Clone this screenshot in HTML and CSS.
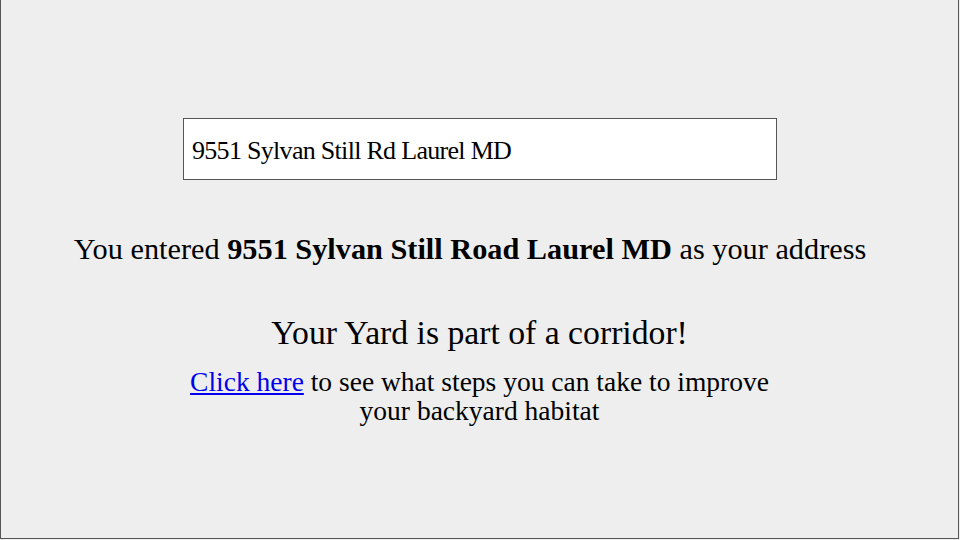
FILE: index.html
```html
<!DOCTYPE html>
<html>
<head>
<meta charset="utf-8">
<link rel="stylesheet" href="styles.css">
</head>
<body>
<div class="slide">
  <div class="address-box">9551 Sylvan Still Rd Laurel MD</div>
  <p class="entered">You entered <b>9551 Sylvan Still Road Laurel MD</b> as your address</p>
  <h1 class="result">Your Yard is part of a corridor!</h1>
  <p class="steps"><a href="#">Click here</a> to see what steps you can take to improve<br>your backyard habitat</p>
</div>
</body>
</html>
```
FILE: styles.css
```css
html, body {
  margin: 0;
  padding: 0;
  background: #eeeeee;
}
.slide {
  box-sizing: border-box;
  width: 959px;
  height: 539px;
  background: #eeeeee;
  border-left: 1px solid #555;
  border-right: 1px solid #555;
  border-bottom: 1px solid #555;
  font-family: "Liberation Serif", serif;
  color: #000;
  display: flex;
  flex-direction: column;
  align-items: center;
  padding-top: 118px;
}
.address-box {
  box-sizing: border-box;
  width: 594px;
  height: 62px;
  margin-left: 1px;
  background: #fff;
  border: 1px solid #555;
  font-size: 26px;
  letter-spacing: -0.7px;
  padding-left: 8px;
  padding-top: 3px;
  display: flex;
  align-items: center;
}
.entered {
  margin: 51px 19px 0 0;
  font-size: 30.3px;
  line-height: 36px;
  white-space: nowrap;
}
.result {
  margin: 46px 0 0 0;
  font-weight: normal;
  font-size: 33.7px;
  line-height: 40px;
}
.steps {
  margin: 13.5px 0 0 0;
  text-align: center;
  font-size: 27.5px;
  line-height: 29px;
}
.steps a {
  color: #0000ee;
}
```
